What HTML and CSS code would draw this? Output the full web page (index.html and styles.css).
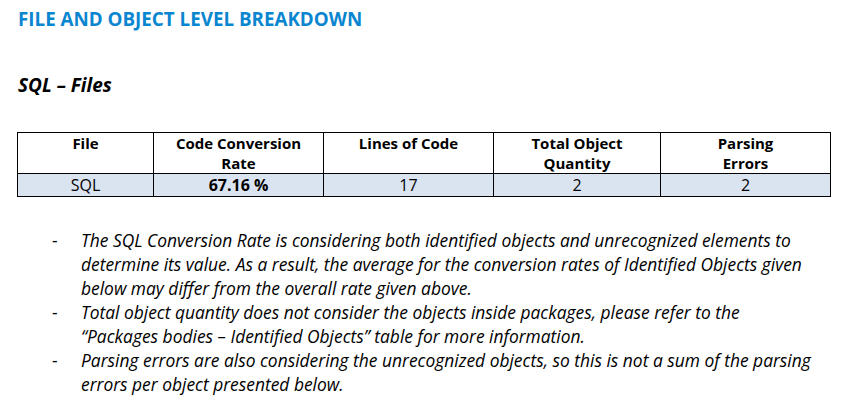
FILE: index.html
```html
<!DOCTYPE html>
<html>
<head>
<meta charset="utf-8">
<link rel="stylesheet" href="styles.css">
</head>
<body>
<div class="page">
  <h1 class="title">FILE AND OBJECT LEVEL BREAKDOWN</h1>
  <h2 class="subtitle">SQL – Files</h2>
  <table class="breakdown">
    <colgroup>
      <col class="c1"><col class="c2"><col class="c3"><col class="c4"><col class="c5">
    </colgroup>
    <thead>
      <tr>
        <th>File</th>
        <th>Code Conversion<br>Rate</th>
        <th>Lines of Code</th>
        <th>Total Object<br>Quantity</th>
        <th>Parsing<br>Errors</th>
      </tr>
    </thead>
    <tbody>
      <tr>
        <td>SQL</td>
        <td class="strong">67.16 %</td>
        <td>17</td>
        <td>2</td>
        <td>2</td>
      </tr>
    </tbody>
  </table>
  <ul class="notes">
    <li>The SQL Conversion Rate is considering both identified objects and unrecognized elements to determine its value. As a result, the average for the conversion rates of Identified Objects given below may differ from the overall rate given above.</li>
    <li>Total object quantity does not consider the objects inside packages, please refer to the “Packages bodies – Identified Objects” table for more information.</li>
    <li>Parsing errors are also considering the unrecognized objects, so this is not a sum of the parsing errors per object presented below.</li>
  </ul>
</div>
</body>
</html>
```
FILE: styles.css
```css
html, body {
  margin: 0;
  padding: 0;
  background: #ffffff;
}
body {
  font-family: "Open Sans", "DejaVu Sans", sans-serif;
  color: #000;
}
.page {
  padding: 6px 0 0 18px;
  width: 812px;
}
.title {
  margin: 0;
  font-size: 18.8px;
  line-height: 26px;
  font-weight: 700;
  color: #0a86d0;
}
.subtitle {
  margin: 41px 0 0 0;
  font-size: 19px;
  line-height: 24px;
  font-weight: 700;
  font-style: italic;
}
.breakdown {
  margin: 35px 0 0 -1px;
  border-collapse: collapse;
  width: 813px;
  table-layout: fixed;
  font-size: 15px;
}
.breakdown .c1 { width: 136px; }
.breakdown .c2 { width: 170px; }
.breakdown .c3 { width: 170px; }
.breakdown .c4 { width: 167px; }
.breakdown .c5 { width: 170px; }
.breakdown th,
.breakdown td {
  border: 1px solid #000;
  text-align: center;
  padding: 0;
}
.breakdown th {
  font-weight: 700;
  line-height: 20px;
  height: 40px;
  vertical-align: top;
}
.breakdown td {
  background: #dae3f0;
  font-size: 16px;
  line-height: 22px;
  height: 22px;
}
.breakdown td.strong {
  font-weight: 700;
}
.notes {
  list-style: none;
  margin: 31px 0 0 0;
  padding: 0 11px 0 34px;
  font-size: 17.4px;
  line-height: 24px;
  font-style: italic;
}
.notes li {
  display: flex;
}
.notes li::before {
  content: "-";
  font-style: normal;
  flex: 0 0 29px;
}
```
